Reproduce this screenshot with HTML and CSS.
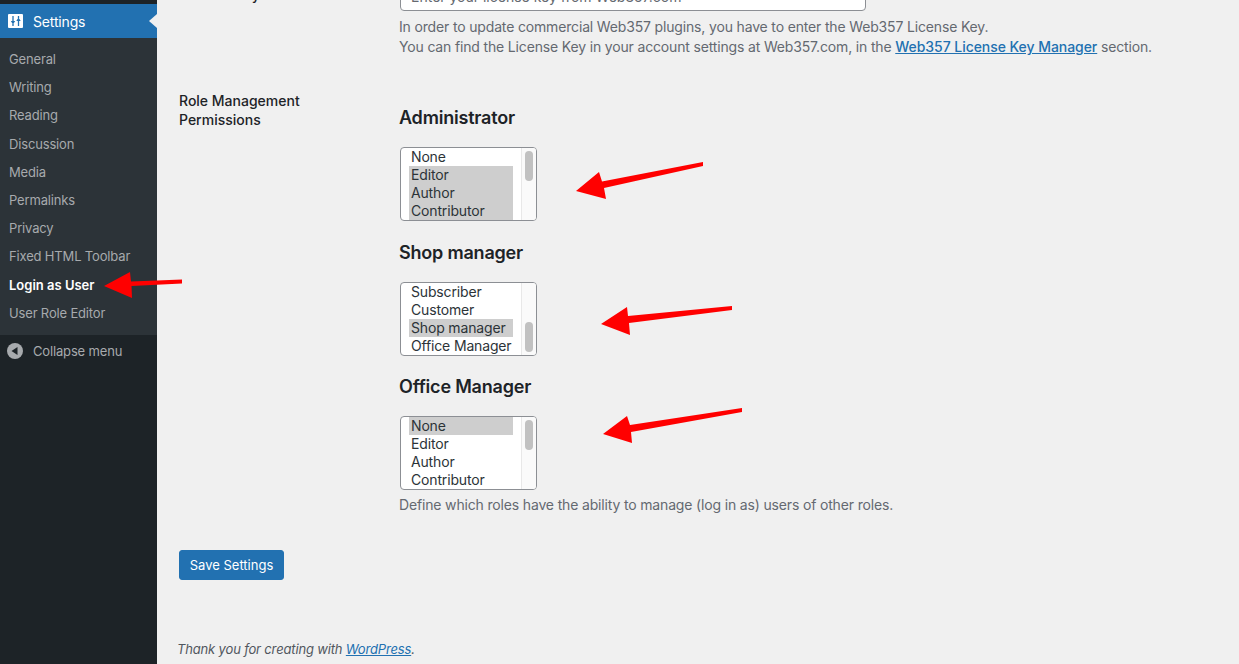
FILE: index.html
```html
<!DOCTYPE html>
<html lang="en">
<head>
    <meta charset="UTF-8">
    <meta name="viewport" content="width=device-width, initial-scale=1.0">
    <title>Login as User Settings</title>
    <link rel="stylesheet" href="styles.css">
</head>
<body>
    <div class="sidebar">
        <div class="menu-current">
            <svg class="menu-icon" width="15" height="14" viewBox="0 0 15 14">
                <rect width="15" height="14" rx="1" fill="#fff"/>
                <path d="M5 2v5M5 10v2M10.500 2v2M10.500 7v5" stroke="#2271b1" stroke-width="1.300" fill="none"/>
                <path d="M2.800 7h4.400L5 10.500zM8.300 7h4.400L10.500 3.500z" fill="#2271b1"/>
            </svg>
            <span>Settings</span>
        </div>
        <ul class="submenu">
            <li>General</li>
            <li>Writing</li>
            <li>Reading</li>
            <li>Discussion</li>
            <li>Media</li>
            <li>Permalinks</li>
            <li>Privacy</li>
            <li>Fixed HTML Toolbar</li>
            <li class="current">Login as User</li>
            <li>User Role Editor</li>
        </ul>
        <div class="collapse">
            <svg class="menu-icon" width="16" height="16" viewBox="0 0 16 16">
                <circle cx="8" cy="8" r="8" fill="#a7aaad"/>
                <path d="M10.500 4v8L4.500 8z" fill="#1d2327"/>
            </svg>
            <span>Collapse menu</span>
        </div>
    </div>

    <div class="main">
        <div class="form-row license-row">
            <div class="row-label">License Key</div>
            <div class="row-field">
                <div class="fake-input">Enter your license key from Web357.com</div>
                <p class="description">In order to update commercial Web357 plugins, you have to enter the Web357 License Key.<br>You can find the License Key in your account settings at Web357.com, in the <a href="#">Web357 License Key Manager</a> section.</p>
            </div>
        </div>

        <div class="form-row roles-row">
            <div class="row-label">Role Management Permissions</div>
            <div class="row-field">
                <h3>Administrator</h3>
                <div class="listbox">
                    <ul class="options">
                        <li>None</li>
                        <li class="selected">Editor</li>
                        <li class="selected">Author</li>
                        <li class="selected">Contributor</li>
                    </ul>
                    <div class="track"><div class="thumb"></div></div>
                </div>

                <h3>Shop manager</h3>
                <div class="listbox">
                    <ul class="options">
                        <li>Subscriber</li>
                        <li>Customer</li>
                        <li class="selected">Shop manager</li>
                        <li>Office Manager</li>
                    </ul>
                    <div class="track track-end"><div class="thumb"></div></div>
                </div>

                <h3>Office Manager</h3>
                <div class="listbox">
                    <ul class="options">
                        <li class="selected">None</li>
                        <li>Editor</li>
                        <li>Author</li>
                        <li>Contributor</li>
                    </ul>
                    <div class="track"><div class="thumb"></div></div>
                </div>
                <p class="description roles-note">Define which roles have the ability to manage (log in as) users of other roles.</p>
            </div>
        </div>

        <button class="save-btn" type="button">Save Settings</button>

        <p class="footer">Thank you for creating with <a href="#">WordPress</a>.</p>
    </div>

    <!-- red annotation arrows drawn over the screenshot -->
    <svg class="arrows" width="1239" height="664" viewBox="0 0 1239 664">
        <path d="M104 286L130 272L131 281.5L182 279.5V283.5L131.500 286L132 298Z"/>
        <path d="M576 191L599 172L602 181.500L703 162V166L604 188L606 199Z"/>
        <path d="M601 324L627 307L628 316L732 306V310L629 323L630 335Z"/>
        <path d="M603 434L627 416L630 425L742 408V412L631 432L632 443Z"/>
    </svg>
</body>
</html>
```

FILE: styles.css
```css
html, body {
    height: 100%;
}
body {
    margin: 0;
    overflow: hidden;
    display: flex;
    background-color: #f0f0f0;
    color: #3c434a;
    font-family: Inter, "Liberation Sans", sans-serif;
    font-size: 13px;
    letter-spacing: -0.16px;
}
ul {
    list-style: none;
    margin: 0;
    padding: 0;
}
a {
    color: #2271b1;
}

/* sidebar */
.sidebar {
    width: 157px;
    flex-shrink: 0;
    padding-top: 4px;
    background-color: #1d2327;
}
.menu-current {
    position: relative;
    display: flex;
    align-items: center;
    height: 34px;
    background-color: #2271b1;
    color: #fff;
    font-size: 14px;
}
.menu-current::after {
    content: "";
    position: absolute;
    right: 0;
    top: 10px;
    border: 7px solid transparent;
    border-right: 8px solid #f0f0f0;
    border-left: 0;
}
.menu-icon {
    margin-left: 8px;
    margin-right: 10px;
    flex-shrink: 0;
}
.submenu {
    padding: 7px 0 8px;
    background-color: #2c3338;
    color: #a7aaad;
    line-height: 1.4;
}
.submenu li {
    padding: 5px 9px;
}
.submenu .current {
    color: #fff;
    font-weight: 600;
    letter-spacing: 0;
}
.collapse {
    display: flex;
    align-items: center;
    height: 33px;
    color: #a7aaad;
}
.collapse .menu-icon {
    margin-left: 7px;
}

/* main */
.main {
    flex: 1;
    padding-left: 22px;
    margin-top: -20px;
}
.form-row {
    display: flex;
}
.row-label {
    width: 220px;
    flex-shrink: 0;
    color: #1d2327;
    font-size: 14px;
    font-weight: 500;
    line-height: 19px;
    letter-spacing: 0;
}
.license-row .row-label {
    padding-top: 5px;
}
.row-field {
    flex: 1;
}
.fake-input {
    box-sizing: border-box;
    width: 466px;
    height: 31px;
    margin-left: 1px;
    padding: 7px 10px;
    background-color: #fff;
    border: 1px solid #8c8f94;
    border-radius: 4px;
    color: #646970;
    font-size: 14px;
    letter-spacing: 0;
}
.description {
    margin: 6px 0 0;
    color: #646970;
    font-size: 14px;
    line-height: 20px;
}
.description a {
    font-weight: 500;
    letter-spacing: -0.05px;
}
.roles-row {
    margin-top: 34px;
}
.roles-row .row-label {
    width: 160px;
    padding-right: 60px;
}
.roles-row .row-field {
    padding-top: 9px;
}
.row-field h3 {
    margin: 0;
    padding-top: 6px;
    color: #1d2327;
    font-size: 18px;
    font-weight: 600;
    line-height: 24px;
    letter-spacing: -0.2px;
}
.listbox {
    box-sizing: border-box;
    display: flex;
    width: 137px;
    height: 74px;
    margin: 17px 0 13.5px 1px;
    background-color: #fff;
    border: 1px solid #8c8f94;
    border-radius: 4px;
    overflow: hidden;
}
.options {
    flex: 1;
    padding: 0 8px;
    color: #2c3338;
    font-size: 14px;
    line-height: 18px;
}
.options li {
    padding-left: 2px;
}
.options .selected {
    background-color: #cecece;
}
.track {
    display: flex;
    flex-direction: column;
    width: 15px;
    padding: 3px;
    box-sizing: border-box;
    background-color: #fafafa;
    border-left: 1px solid #e8e8e8;
}
.track-end {
    justify-content: flex-end;
}
.thumb {
    width: 8px;
    height: 30px;
    border-radius: 4px;
    background-color: #c1c1c1;
}
.roles-note {
    margin-top: -8.5px;
}
.save-btn {
    display: block;
    width: 105px;
    height: 30px;
    margin-top: 35px;
    padding: 0;
    background-color: #2271b1;
    border: 1px solid #2271b1;
    border-radius: 3px;
    color: #fff;
    font-family: inherit;
    font-size: 13px;
}
.footer {
    margin: 60px 0 0 -2px;
    color: #50575e;
    font-size: 13px;
    font-style: italic;
    line-height: 18px;
}

.arrows {
    position: absolute;
    left: 0;
    top: 0;
    pointer-events: none;
}
.arrows path {
    fill: #ff0000;
}
```
